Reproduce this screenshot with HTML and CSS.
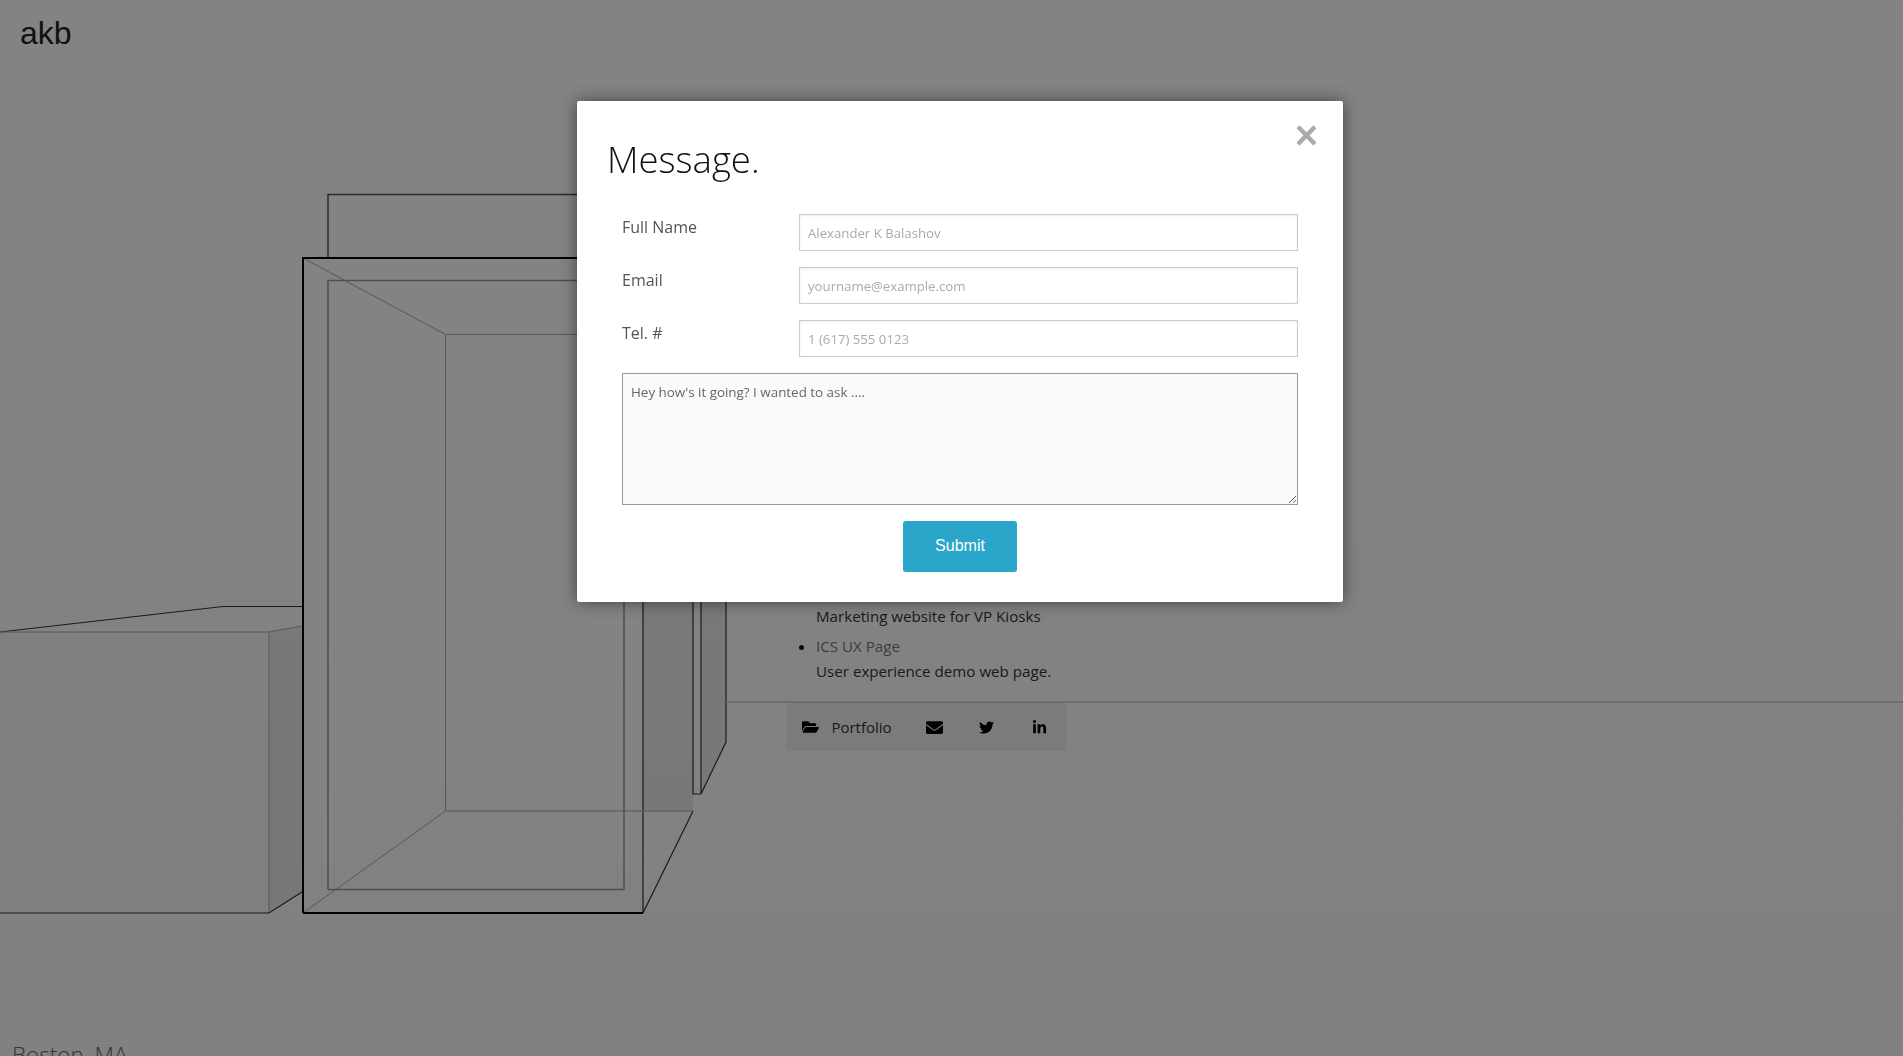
FILE: index.html
```html
<!DOCTYPE html>
<html lang="en">
<head>
<meta charset="utf-8">
<title>akb</title>
<link rel="stylesheet" href="styles.css">
</head>
<body>
<div class="page">
  <svg class="drawing" viewBox="0 0 1903 1056" width="1903" height="1056" aria-hidden="true">
    <polygon class="shade-light" points="446,335 693,335 693,811 446,811"/>
    <polygon class="shade-soft" points="0,632 269,632 269,913 0,913"/>
    <polygon class="shade" points="269,632 302,626 302,892 269,913"/>
    <polygon class="shade" points="643,580 693,580 693,811 643,811"/>
    <polygon class="shade" points="701,580 726,580 726,742 701,794"/>
    <path class="line-a" d="M0 632 L223 606.5 H302"/>
    <path class="line-c" d="M0 632 H269 L302 626 M269 632 V913"/>
    <path class="line-a" d="M0 913 H269 L302 892"/>
    <path class="line-d" d="M328 257 V194.5 H600"/>
    <path class="line-a" d="M643 580 V913 L693 811 M701 580 V794 H693 V580 M726 580 V742 L701 794"/>
    <path class="line-b" d="M328 889.5 V280.5 H640 M328 889.5 H624 V580"/>
    <path class="line-c" d="M445.5 811 V334.5 H640 M445.5 811 H693 M303 258 L445.5 334.5 M303 913 L445.5 811"/>
    <path class="line-main" d="M303 913 V258 H640 M303 913 H643"/>
  </svg>

  <header class="brand">akb</header>

  <main class="info">
    <ul class="projects">
      <li><a class="project-link" href="#">VP Kiosks</a><span class="project-note">Marketing website for VP Kiosks</span></li>
      <li><a class="project-link" href="#">ICS UX Page</a><span class="project-note">User experience demo web page.</span></li>
    </ul>
  </main>

  <nav class="social">
    <a class="social-item social-wide" href="#">
      <svg class="icon icon-folder" viewBox="0 0 576 512"><path d="M572.694 292.093L500.27 416.248A63.997 63.997 0 0 1 444.989 448H45.025c-18.523 0-30.064-20.093-20.731-36.093l72.424-124.155A64 64 0 0 1 152 256h399.964c18.523 0 30.064 20.093 20.73 36.093zM152 224h328v-48c0-26.51-21.49-48-48-48H272l-64-64H48C21.49 64 0 85.49 0 112v278.046l69.077-118.418C86.214 242.25 118.131 224 152 224z"/></svg>
      <span>Portfolio</span>
    </a>
    <a class="social-item" href="#" aria-label="Email">
      <svg class="icon" viewBox="0 0 512 512"><path d="M502.3 190.8c3.9-3.1 9.7-.2 9.7 4.7V400c0 26.5-21.5 48-48 48H48c-26.5 0-48-21.5-48-48V195.6c0-5 5.7-7.8 9.7-4.7 22.4 17.4 52.1 39.5 154.1 113.6 21.1 15.4 56.7 47.8 92.2 47.6 35.7.3 72-32.8 92.3-47.6 102-74.1 131.6-96.3 154-113.7zM256 320c23.2.4 56.6-29.2 73.4-41.4 132.7-96.3 142.8-104.7 173.4-128.7 5.8-4.5 9.2-11.5 9.2-18.9v-19c0-26.5-21.5-48-48-48H48C21.5 64 0 85.5 0 112v19c0 7.4 3.4 14.3 9.2 18.9 30.6 23.9 40.7 32.4 173.4 128.7 16.8 12.2 50.2 41.8 73.4 41.4z"/></svg>
    </a>
    <a class="social-item" href="#" aria-label="Twitter">
      <svg class="icon icon-small" viewBox="0 0 512 512"><path d="M459.37 151.716c.325 4.548.325 9.097.325 13.645 0 138.72-105.583 298.558-298.558 298.558-59.452 0-114.68-17.219-161.137-47.106 8.447.974 16.568 1.299 25.34 1.299 49.055 0 94.213-16.568 130.274-44.832-46.132-.975-84.792-31.188-98.112-72.772 6.498.974 12.995 1.624 19.818 1.624 9.421 0 18.843-1.3 27.614-3.573-48.081-9.747-84.143-51.98-84.143-102.985v-1.299c13.969 7.797 30.214 12.67 47.431 13.319-28.264-18.843-46.781-51.005-46.781-87.391 0-19.492 5.197-37.36 14.294-52.954 51.655 63.675 129.3 105.258 216.365 109.807-1.624-7.797-2.599-15.918-2.599-24.04 0-57.828 46.782-104.934 104.934-104.934 30.213 0 57.502 12.67 76.67 33.137 23.715-4.548 46.456-13.32 66.599-25.34-7.798 24.366-24.366 44.833-46.132 57.827 21.117-2.273 41.584-8.122 60.426-16.243-14.292 20.791-32.161 39.308-52.628 54.253z"/></svg>
    </a>
    <a class="social-item" href="#" aria-label="LinkedIn">
      <svg class="icon icon-small" viewBox="0 0 448 512"><path d="M100.28 448H7.4V148.9h92.88zM53.79 108.1C24.09 108.1 0 83.5 0 53.8a53.79 53.79 0 0 1 107.58 0c0 29.7-24.1 54.3-53.79 54.3zM447.9 448h-92.68V302.4c0-34.7-.7-79.2-48.29-79.2-48.29 0-55.69 37.7-55.69 76.7V448h-92.78V148.9h89.08v40.8h1.3c12.4-23.5 42.69-48.3 87.88-48.3 94 0 111.28 61.9 111.28 142.3V448z"/></svg>
    </a>
  </nav>

  <footer class="location">Boston, MA</footer>
</div>

<div class="backdrop"></div>

<section class="modal">
  <a class="modal-close" href="#" aria-label="Close">&#215;</a>
  <h2 class="modal-title">Message.</h2>
  <form class="message-form">
    <div class="field">
      <label class="field-label" for="name">Full Name</label>
      <input class="field-input" id="name" type="text" placeholder="Alexander K Balashov">
    </div>
    <div class="field">
      <label class="field-label" for="email">Email</label>
      <input class="field-input" id="email" type="text" placeholder="yourname@example.com">
    </div>
    <div class="field">
      <label class="field-label" for="tel">Tel. #</label>
      <input class="field-input" id="tel" type="text" placeholder="1 (617) 555 0123">
    </div>
    <textarea class="field-message" placeholder="Hey how's it going? I wanted to ask ...."></textarea>
    <button class="submit" type="button">Submit</button>
  </form>
</section>
</body>
</html>
```

FILE: styles.css
```css
* { box-sizing: border-box; }

html, body {
  margin: 0;
  height: 100%;
  overflow: hidden;
  background: #fff;
  font-family: "Open Sans", "Noto Sans", sans-serif;
}

.page {
  position: relative;
  height: 1056px;
  overflow: hidden;
  display: flex;
  flex-direction: column;
  background: linear-gradient(#fff, #fff 50%, #fbfbfb);
}

.page > * { flex: none; }

.drawing {
  position: absolute;
  inset: 0;
}

.drawing path { fill: none; }
.shade { fill: rgba(0, 0, 0, .08); }
.shade-soft { fill: rgba(0, 0, 0, .02); }
.shade-light { fill: rgba(255, 255, 255, .6); }
.line-main { stroke: #000; stroke-width: 2; }
.line-a { stroke: #333; stroke-width: 1.2; }
.line-b { stroke: #999; stroke-width: 1.5; }
.line-c { stroke: #aaa; stroke-width: 1; }
.line-d { stroke: #555; stroke-width: 1.5; }

.brand {
  position: relative;
  padding: 15px 0 0 20px;
  height: 560px;
  font: 32px/36px "Liberation Sans", Arial, sans-serif;
  color: #222;
}

.info {
  position: relative;
  margin-left: 726px;
  padding: 19px 0 0 60px;
  height: 143px;
  border-bottom: 2px solid #d8d8d8;
}

.projects {
  margin: 0;
  padding: 0 0 0 30px;
  font-size: 15.15px;
  line-height: 25px;
  color: #333;
}

.projects li { margin-bottom: 5px; }
.projects li::marker { color: #111; }
.project-note { display: block; }
.project-link { color: #777; text-decoration: none; display: block; }

.social {
  position: relative;
  align-self: flex-start;
  margin-left: 786px;
  display: flex;
  width: 280px;
  height: 48px;
  background: #f0f0f0;
}

.social-item {
  display: flex;
  align-items: center;
  justify-content: center;
  width: 53px;
  color: #333;
  text-decoration: none;
  font-size: 15px;
}

.social-wide { width: 121px; gap: 12px; padding-left: 1px; }

.icon { width: 17px; height: 17px; fill: #000; margin-left: 2px; }
.social-wide .icon { margin-left: 0; }
.icon-folder { width: 17px; height: 16px; }
.icon-small { width: 15px; height: 15px; margin-left: 0; }

.location {
  position: relative;
  margin: 288px 0 0 12px;
  font-size: 22.5px;
  font-weight: 300;
  color: #666;
}

.backdrop {
  position: fixed;
  inset: 0;
  background: rgba(0, 0, 0, .485);
}

.modal {
  position: absolute;
  top: 101px;
  left: 577px;
  width: 766px;
  height: 501px;
  padding: 28px 45px 30px 30px;
  background: #fff;
  border-radius: 2px;
  box-shadow: 0 0 16px rgba(0, 0, 0, .5);
}

.modal-close {
  position: absolute;
  top: 14px;
  right: 25px;
  font: bold 40px/40px "Liberation Sans", Arial, sans-serif;
  color: #aaa;
  text-decoration: none;
}

.modal-title {
  margin: 0 0 25px;
  font-size: 36.5px;
  font-weight: 300;
  line-height: 60px;
  color: #111;
}

.message-form {
  display: flex;
  flex-direction: column;
  padding-left: 15px;
}

.field {
  display: grid;
  grid-template-columns: 177px 1fr;
  margin-bottom: 16px;
}

.field-label {
  font-size: 16px;
  line-height: 27px;
  color: #555;
}

.field-input {
  height: 37px;
  padding: 0 8px;
  border: 1px solid #ccc;
  border-radius: 0;
  box-shadow: inset 0 1px 2px rgba(0, 0, 0, .08);
  font: 13.2px "Open Sans", "Noto Sans", sans-serif;
  outline: none;
}

.field-input::placeholder { color: #aaa; opacity: 1; }

.field-message {
  height: 132px;
  padding: 9px 8px;
  border: 1px solid #999;
  border-radius: 0;
  background: #fafafa;
  font: 13.4px/18px "Open Sans", "Noto Sans", sans-serif;
  outline: none;
}

.field-message::placeholder { color: #666; opacity: 1; }

.submit {
  align-self: center;
  margin-top: 16px;
  width: 114px;
  height: 51px;
  border: 0;
  border-radius: 3px;
  background: #2ba6cb;
  color: #fff;
  font: 16px "Liberation Sans", Arial, sans-serif;
  padding-bottom: 2px;
}
```
